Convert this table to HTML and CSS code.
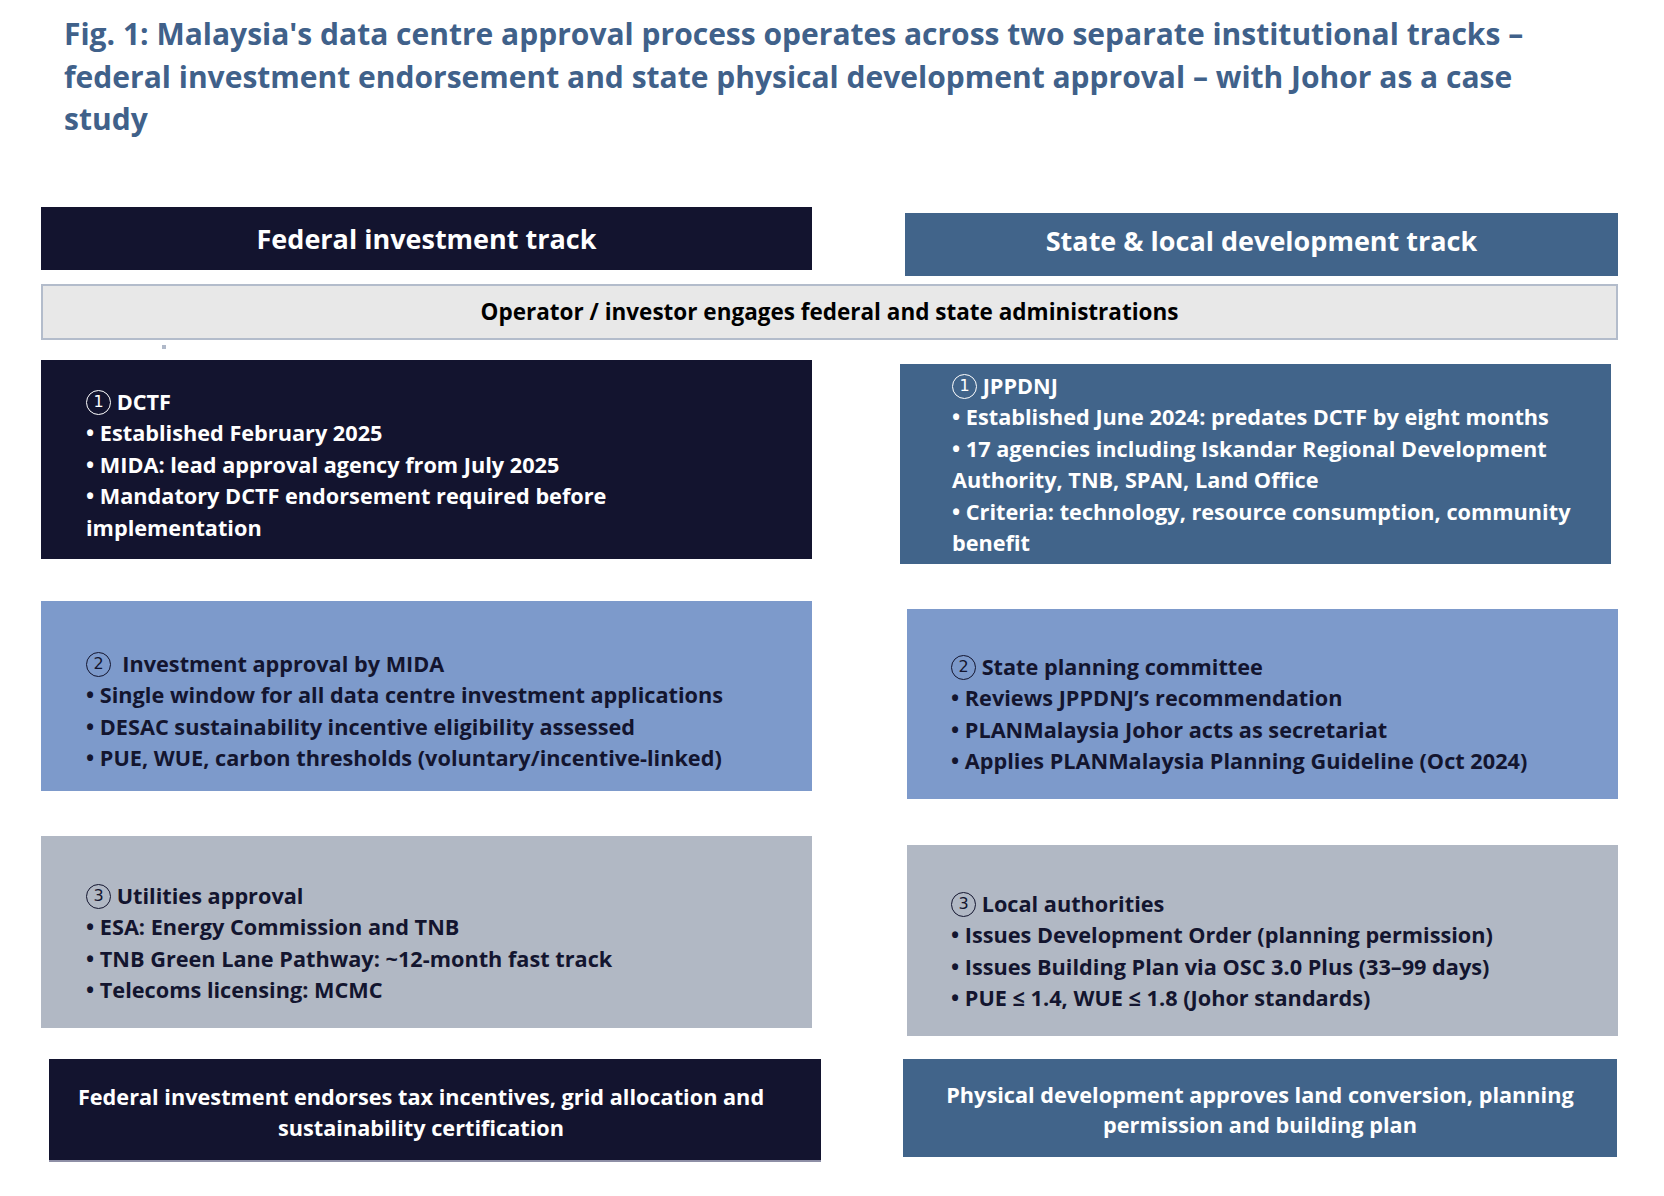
FILE: index.html
```html
<!DOCTYPE html>
<html lang="en">
<head>
<meta charset="utf-8">
<title>Fig. 1: Malaysia's data centre approval process</title>
<link rel="stylesheet" href="styles.css">
</head>
<body>
<div class="page">
  <h1 class="title">Fig. 1: Malaysia's data centre approval process operates across two separate institutional tracks –<br>federal investment endorsement and state physical development approval – with Johor as a case<br>study</h1>

  <div class="heads">
    <div class="head head-federal">Federal investment track</div>
    <div class="head head-state">State &amp; local development track</div>
  </div>

  <div class="operator">Operator / investor engages federal and state administrations</div>

  <div class="columns">
    <div class="col col-left">
      <div class="dot"></div>
      <div class="box navy lb1">
        <div class="line"><span class="num">1</span> DCTF</div>
        <div class="line">• Established February 2025</div>
        <div class="line">• MIDA: lead approval agency from July 2025</div>
        <div class="line">• Mandatory DCTF endorsement required before<br>implementation</div>
      </div>
      <div class="box light lb2">
        <div class="line"><span class="num">2</span>&nbsp; Investment approval by MIDA</div>
        <div class="line">• Single window for all data centre investment applications</div>
        <div class="line">• DESAC sustainability incentive eligibility assessed</div>
        <div class="line">• PUE, WUE, carbon thresholds (voluntary/incentive-linked)</div>
      </div>
      <div class="box grey lb3">
        <div class="line"><span class="num">3</span> Utilities approval</div>
        <div class="line">• ESA: Energy Commission and TNB</div>
        <div class="line">• TNB Green Lane Pathway: ~12-month fast track</div>
        <div class="line">• Telecoms licensing: MCMC</div>
      </div>
      <div class="outcome navy lout">Federal investment endorses tax incentives, grid allocation and<br>sustainability certification</div>
    </div>

    <div class="col col-right">
      <div class="box slate rb1">
        <div class="line"><span class="num">1</span> JPPDNJ</div>
        <div class="line">• Established June 2024: predates DCTF by eight months</div>
        <div class="line">• 17 agencies including Iskandar Regional Development<br>Authority, TNB, SPAN, Land Office</div>
        <div class="line">• Criteria: technology, resource consumption, community<br>benefit</div>
      </div>
      <div class="box light rb2">
        <div class="line"><span class="num">2</span> State planning committee</div>
        <div class="line">• Reviews JPPDNJ’s recommendation</div>
        <div class="line">• PLANMalaysia Johor acts as secretariat</div>
        <div class="line">• Applies PLANMalaysia Planning Guideline (Oct 2024)</div>
      </div>
      <div class="box grey rb3">
        <div class="line"><span class="num">3</span> Local authorities</div>
        <div class="line">• Issues Development Order (planning permission)</div>
        <div class="line">• Issues Building Plan via OSC 3.0 Plus (33–99 days)</div>
        <div class="line">• PUE ≤ 1.4, WUE ≤ 1.8 (Johor standards)</div>
      </div>
      <div class="outcome slate rout">Physical development approves land conversion, planning<br>permission and building plan</div>
    </div>
  </div>
</div>
</body>
</html>
```
FILE: styles.css
```css
* { box-sizing: border-box; }

html, body {
  margin: 0;
  padding: 0;
  background: #ffffff;
}

body {
  font-family: "Open Sans", "Lato", sans-serif;
  font-weight: 700;
  color: #13152f;
}

.page {
  width: 1664px;
  padding: 13px 0 0 41px;
}

.title {
  margin: 0 0 0 23px;
  font-size: 30px;
  line-height: 42.5px;
  font-weight: 700;
  color: #40618a;
  white-space: nowrap;
}

.heads {
  display: flex;
  align-items: flex-start;
  margin-top: 66px;
}

.head {
  height: 63px;
  display: flex;
  align-items: center;
  justify-content: center;
  color: #ffffff;
  font-size: 27px;
}

.head-federal {
  width: 771px;
  background: #13142f;
}

.head-state {
  width: 713px;
  margin-left: 93px;
  margin-top: 6px;
  background: #41648a;
  padding-bottom: 8px;
}

.operator {
  width: 1577px;
  height: 56px;
  margin-top: 8px;
  background: #e8e8e8;
  border: 2px solid #b3bccb;
  display: flex;
  align-items: center;
  justify-content: center;
  font-size: 22.5px;
  color: #000000;
}

.columns {
  display: flex;
  align-items: flex-start;
}

.col {
  display: flex;
  flex-direction: column;
}

.col-left { width: 780px; }
.col-right { width: 718px; margin-left: 79px; }

.dot {
  width: 4px;
  height: 4px;
  margin: 5px 0 0 121px;
  background: #b0b9c9;
}

.box {
  font-size: 21.7px;
  line-height: 31.5px;
  white-space: nowrap;
}

.navy { background: #13142f; color: #ffffff; }
.slate { background: #41648a; color: #ffffff; }
.light { background: #7d9acb; color: #13152f; }
.grey { background: #b1b8c4; color: #13152f; }

.num {
  display: inline-block;
  overflow: hidden;
  width: 25px;
  height: 25px;
  border: 1.5px solid currentColor;
  border-radius: 50%;
  font-size: 16px;
  font-weight: 400;
  line-height: 22px;
  text-align: center;
  vertical-align: -5px;
  font-family: "DejaVu Sans", sans-serif;
}

.lb1 { width: 771px; height: 199px; margin-top: 11px; padding: 26px 0 0 45px; }
.lb2 { width: 771px; height: 190px; margin-top: 42px; padding: 47px 0 0 45px; }
.lb3 { width: 771px; height: 192px; margin-top: 45px; padding: 44px 0 0 45px; }

.rb1 { width: 711px; height: 200px; margin-top: 24px; padding: 6px 0 0 52px; }
.rb2 { width: 711px; height: 190px; margin-top: 45px; margin-left: 7px; padding: 42px 0 0 44px; }
.rb3 { width: 711px; height: 191px; margin-top: 46px; margin-left: 7px; padding: 43px 0 0 44px; }

.outcome {
  display: flex;
  align-items: center;
  justify-content: center;
  text-align: center;
  font-size: 21.7px;
  line-height: 30.5px;
  white-space: nowrap;
}

.lout {
  width: 772px;
  height: 103px;
  margin-top: 31px;
  margin-left: 8px;
  padding: 7px 48px 0 20px;
  border-bottom: 2px solid #8e8fa6;
}

.rout {
  width: 714px;
  height: 98px;
  margin-top: 23px;
  margin-left: 3px;
  padding-top: 5px;
}
```
